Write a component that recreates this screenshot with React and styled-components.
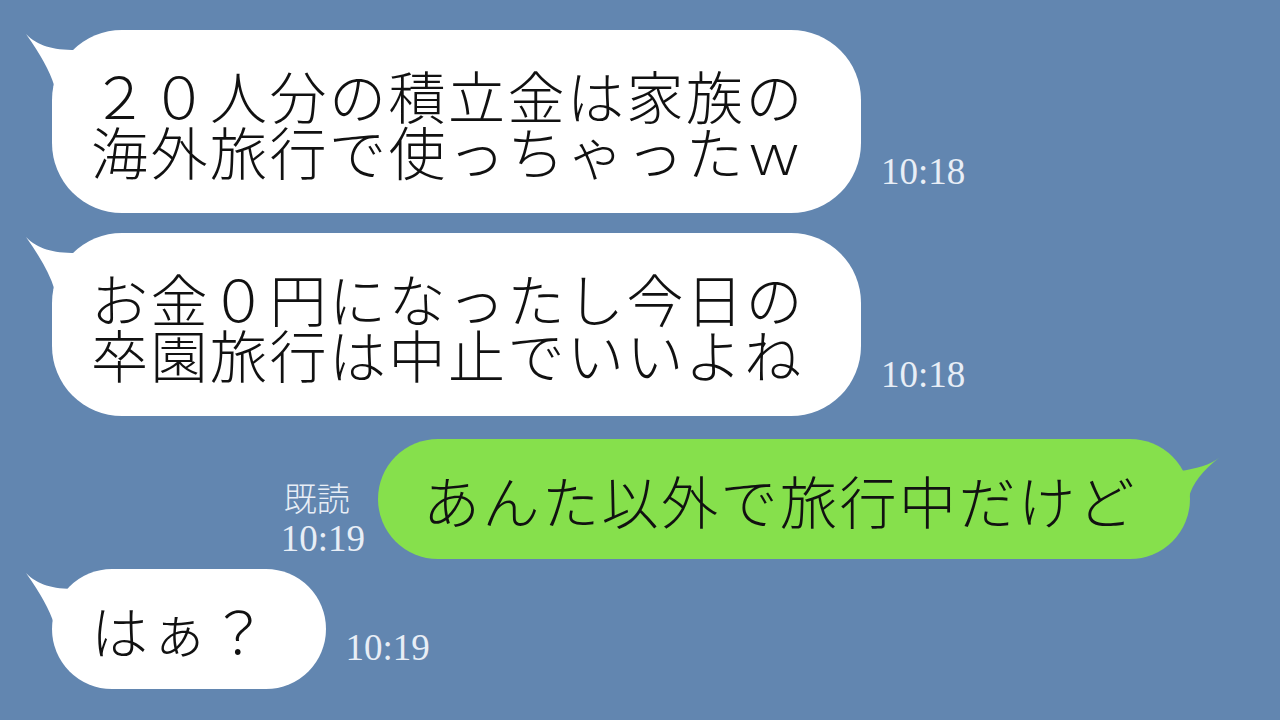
import React from "react";
import styled, { createGlobalStyle } from "styled-components";

const Global = createGlobalStyle`
  html, body { margin: 0; padding: 0; background: #6286b0; }
  body { width: 1280px; height: 720px; overflow: hidden; }
`;

const Chat = styled.main`
  display: flex;
  flex-direction: column;
  padding-top: 30px;
  font-family: "Noto Sans CJK JP", "Noto Sans", sans-serif;
`;

const Row = styled.div`
  display: flex;
  align-items: flex-end;
  justify-content: ${(p) => (p.$mine ? "flex-end" : "flex-start")};
  padding: 0 ${(p) => (p.$mine ? "90px" : "0")} 0 ${(p) => (p.$mine ? "0" : "52px")};
  margin-top: ${(p) => p.$gap || 0}px;
`;

const Bubble = styled.div`
  position: relative;
  background: ${(p) => (p.$mine ? "#86e04c" : "#ffffff")};
  border-radius: 70px;
  padding: ${(p) => (p.$lines > 1 ? "36px" : "32px")} ${(p) => (p.$mine ? "53px" : "56px")}
    ${(p) => (p.$lines > 1 ? "35px" : "32px")} ${(p) => (p.$mine ? "45px" : "39px")};
  font-size: 57px;
  line-height: 56px;
  letter-spacing: 2.5px;
  font-weight: 300;
  color: #111;
  white-space: nowrap;
`;

const TailSvg = styled.svg`
  position: absolute;
  top: 0;
  overflow: visible;
  left: ${(p) => (p.$mine ? "calc(100% - 20px)" : "-30px")};
`;

const Time = styled.span`
  font-family: "Liberation Serif", serif;
  font-size: 37px;
  line-height: 36px;
  color: #e8eef6;
  margin: 0 0 23px 20px;
`;

const ReadInfo = styled.div`
  display: flex;
  flex-direction: column;
  align-items: flex-start;
  margin: 0 13px 2px 0;
  font-family: "Liberation Serif", "Noto Sans CJK JP", serif;
  color: #e8eef6;
`;

const ReadLabel = styled.span`
  font-size: 33px;
  line-height: 42px;
  padding-left: 3px;
  font-weight: 300;
`;

const ReadTime = styled.span`
  font-size: 37px;
  line-height: 36px;
`;

function Tail({ mine, color }) {
  if (mine) {
    return (
      <TailSvg $mine width="60" height="80" viewBox="-20 0 60 80">
        <path
          d="M 30 18 C 21 26 5 30 -10 32 L -10 70 L -1 70 L -1 58 Q 4 38 30 18 Z"
          fill={color}
        />
      </TailSvg>
    );
  }
  return (
    <TailSvg width="60" height="90" viewBox="-30 0 60 90">
      <path
        d="M -26 4 C -14 16 0 20 24 20 L 24 60 L 2 60 L 2 55 Q -4 35 -26 4 Z"
        fill={color}
      />
    </TailSvg>
  );
}

function Incoming({ lines, time, gap }) {
  return (
    <Row $gap={gap}>
      <Bubble $lines={lines.length}>
        <Tail color="#ffffff" />
        {lines.map((l, i) => (
          <React.Fragment key={i}>
            {i > 0 && <br />}
            {l}
          </React.Fragment>
        ))}
      </Bubble>
      <Time>{time}</Time>
    </Row>
  );
}

export default function App() {
  return (
    <>
      <Global />
      <Chat>
        <Incoming
          lines={["２０人分の積立金は家族の", "海外旅行で使っちゃったｗ"]}
          time="10:18"
        />
        <Incoming
          gap={20}
          lines={["お金０円になったし今日の", "卒園旅行は中止でいいよね"]}
          time="10:18"
        />
        <Row $mine $gap={23}>
          <ReadInfo>
            <ReadLabel>既読</ReadLabel>
            <ReadTime>10:19</ReadTime>
          </ReadInfo>
          <Bubble $mine $lines={1}>
            <Tail mine color="#86e04c" />
            あんた以外で旅行中だけど
          </Bubble>
        </Row>
        <Incoming gap={10} lines={["はぁ？"]} time="10:19" />
      </Chat>
    </>
  );
}
